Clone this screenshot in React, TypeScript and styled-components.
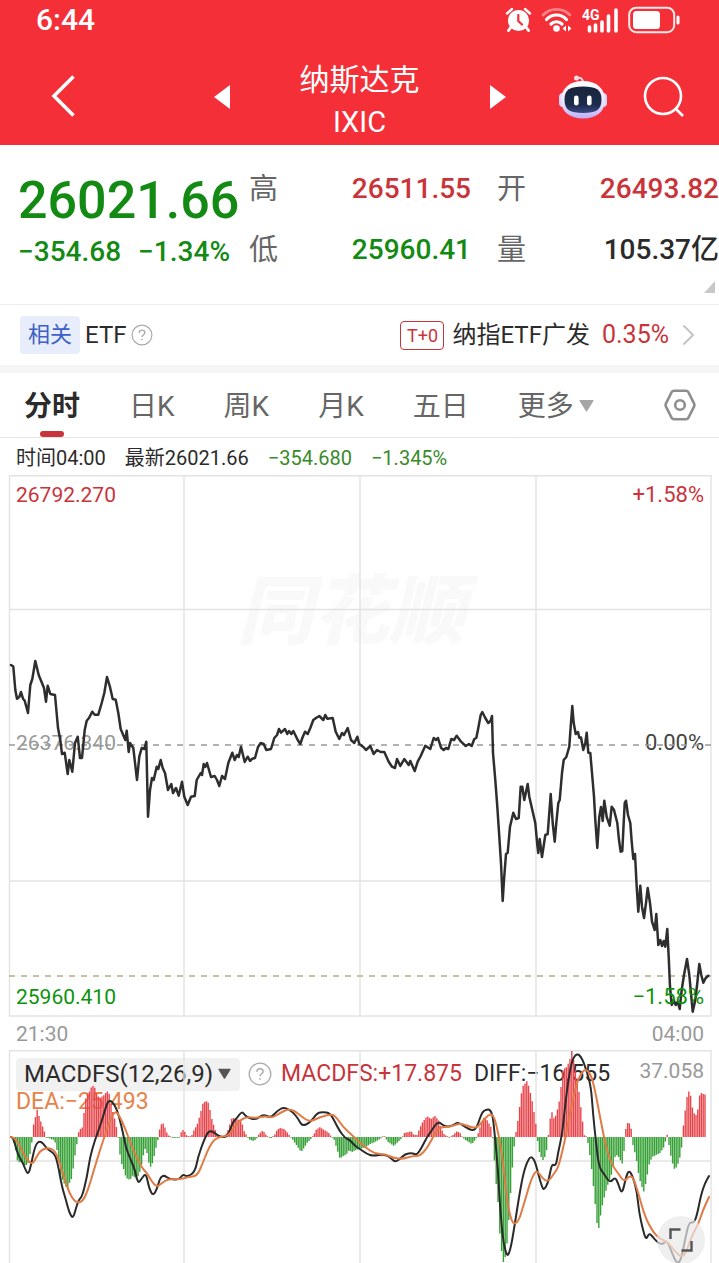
import React from "react";
import styled, { createGlobalStyle } from "styled-components";

const RED = "#c9343b";
const GREEN = "#138a13";
const INK = "#2b2b2b";
const MUTED = "#666";
const ORANGE = "#e8824a";

const GlobalStyle = createGlobalStyle`
  * { box-sizing: border-box; }
  body {
    margin: 0;
    background: #fff;
    color: ${INK};
    font-family: Roboto, "Noto Sans CJK SC", sans-serif;
  }
  button {
    margin: 0;
    padding: 0;
    border: 0;
    background: none;
    color: inherit;
    font: inherit;
    cursor: pointer;
  }
  a { color: inherit; text-decoration: none; }
  svg { display: block; }
`;

const Page = styled.main`
  width: 100%;
  overflow: hidden;
`;

/* ---------- header ---------- */

const Header = styled.header`
  background: #f42f38;
  color: #fff;
`;

const StatusBar = styled.div`
  display: flex;
  align-items: center;
  justify-content: space-between;
  height: 40px;
  padding: 0 38px 0 36px;
  font-size: 30px;
  font-weight: 500;
  line-height: 40px;
`;

const StatusIcons = styled.div`
  display: flex;
  align-items: center;
  gap: 9px;
`;

const NavBar = styled.nav`
  display: grid;
  grid-template-columns: 1fr 292px 1fr;
  align-items: center;
  height: 105px;
  padding-top: 9px;
`;

const NavStart = styled.div`
  display: flex;
  padding: 0 0 3px 51px;
`;

const NavCenter = styled.div`
  display: flex;
  align-items: center;
  justify-content: space-between;
`;

const NavEnd = styled.div`
  display: flex;
  align-items: center;
  justify-content: flex-end;
  gap: 35px;
  padding-right: 34px;
`;

const Title = styled.h1`
  margin: 0;
  padding-top: 8px;
  text-align: center;
  font-size: 30px;
  font-weight: 400;
  line-height: 42px;
`;

const Ticker = styled.span`
  display: block;
  font-size: 29px;
`;

/* ---------- quote ---------- */

const Quote = styled.section`
  position: relative;
  display: flex;
  height: 160px;
  padding: 23px 0 0 18px;
  border-bottom: 1px solid #ededed;
`;

const PriceBlock = styled.div`
  flex: 0 0 231px;
  color: ${GREEN};
`;

const Price = styled.div`
  font-size: 52px;
  font-weight: 500;
  line-height: 66px;
`;

const Changes = styled.div`
  display: flex;
  gap: 17px;
  font-size: 28px;
  font-weight: 500;
  line-height: 36px;
`;

const Stats = styled.dl`
  flex: 1;
  display: grid;
  grid-template-columns: 1fr 1fr;
  grid-auto-rows: 42px;
  gap: 19px 26px;
  margin: 0;
`;

const Stat = styled.div`
  display: flex;
  align-items: center;
  justify-content: space-between;
  line-height: 42px;
`;

const StatLabel = styled.dt`
  color: ${MUTED};
  font-size: 29px;
`;

const StatValue = styled.dd<{ $color: string }>`
  margin: 0;
  color: ${(p) => p.$color};
  font-size: 28px;
  font-weight: 500;
  line-height: 44px;
  white-space: nowrap;
`;

const ExpandCorner = styled.button`
  position: absolute;
  right: 4px;
  bottom: 11px;
`;

/* ---------- related fund ---------- */

const Related = styled.section`
  display: flex;
  align-items: center;
  justify-content: space-between;
  height: 68px;
  padding: 0 24px 0 20px;
  border-bottom: 8px solid #f5f5f5;
  font-size: 24px;
`;

const RelatedGroup = styled.div`
  display: flex;
  align-items: center;
  gap: 5px;
`;

const RelatedTag = styled.span`
  padding: 0 8px;
  border-radius: 4px;
  background: #e8edfb;
  color: #3e5fc8;
  font-size: 22px;
  line-height: 38px;
`;

const Fund = styled.a`
  display: flex;
  align-items: center;
  line-height: 32px;
`;

const FundBadge = styled.span`
  width: 44px;
  border: 1px solid ${RED};
  border-radius: 4px;
  color: ${RED};
  font-size: 18px;
  line-height: 27px;
  text-align: center;
`;

const FundName = styled.span`
  margin: 0 12px 0 8px;
`;

const FundChange = styled.span`
  margin-right: 13px;
  color: ${RED};
  font-size: 25px;
`;

/* ---------- tabs ---------- */

const Tabs = styled.nav`
  display: flex;
  gap: 49px;
  height: 65px;
  padding: 0 23px 0 24px;
  border-bottom: 1px solid #e6e6e6;
  font-size: 28px;
  line-height: 64px;
`;

const Tab = styled.button<{ $active?: boolean }>`
  position: relative;
  display: flex;
  align-items: center;
  gap: 5px;
  padding-top: 3px;
  color: ${(p) => (p.$active ? INK : MUTED)};
  font-weight: ${(p) => (p.$active ? 700 : 400)};
  white-space: nowrap;

  &::after {
    content: "";
    display: ${(p) => (p.$active ? "block" : "none")};
    position: absolute;
    bottom: 0;
    left: 50%;
    width: 24px;
    height: 6px;
    margin-left: -12px;
    border-radius: 3px;
    background: ${RED};
  }
`;

const SettingsButton = styled.button`
  margin-left: auto;
`;

/* ---------- charts ---------- */

const Readout = styled.div`
  display: flex;
  gap: 19px;
  height: 37px;
  padding-left: 16px;
  font-size: 20px;
  line-height: 41px;
`;

const Colored = styled.span<{ $color: string }>`
  color: ${(p) => p.$color};
`;

const ChartPanel = styled.section`
  position: relative;
`;

const ChartSvg = styled.svg`
  position: relative;
  width: 100%;
  height: auto;
  pointer-events: none;
`;

const AxisRow = styled.div<{ $top?: string; $color: string }>`
  position: absolute;
  top: ${(p) => p.$top};
  left: 0;
  right: 0;
  display: flex;
  justify-content: space-between;
  padding: 0 15px 0 16px;
  color: ${(p) => p.$color};
  font-size: 21px;
  line-height: 24px;
`;

const AxisPercent = styled.span<{ $color?: string }>`
  color: ${(p) => p.$color ?? "inherit"};
  font-size: 22px;
`;

const TimeAxis = styled.div`
  display: flex;
  justify-content: space-between;
  height: 33px;
  padding: 0 15px 0 16px;
  color: #999;
  font-size: 21px;
  line-height: 35px;
`;

const Legend = styled.div`
  position: absolute;
  top: 7px;
  left: 16px;
  right: 15px;
  font-size: 23px;
`;

const LegendRow = styled.div`
  display: flex;
  align-items: center;
  line-height: 34px;
  white-space: nowrap;
`;

const IndicatorButton = styled.button`
  display: flex;
  align-items: center;
  justify-content: space-between;
  width: 224px;
  margin-right: 8px;
  padding: 0 9px 0 8px;
  border-radius: 4px;
  background: #f1f1f1;
  font-size: 24px;
  line-height: 33px;
`;

const LegendValue = styled.span<{ $color: string }>`
  margin-left: 9px;
  color: ${(p) => p.$color};

  & + & { margin-left: 12px; }
`;

const ScaleMax = styled.span`
  margin-left: auto;
  color: #999;
  font-size: 21px;
  line-height: 24px;
  padding-bottom: 7px;
`;

const DeaValue = styled.div`
  color: ${ORANGE};
  line-height: 22px;
`;

const FullscreenButton = styled.button`
  position: absolute;
  right: 14px;
  bottom: -1px;
  display: grid;
  place-items: center;
  width: 48px;
  height: 48px;
  border-radius: 50%;
  background: rgba(232, 232, 232, 0.7);
`;

/* ---------- data ---------- */

type Point = [number, number];

const parse = (s: string): Point[] =>
  s.trim().split(/\s+/).map((p) => p.split(",").map(Number) as Point);

const price = `
11,665 13.3,666.5 15.3,690 17,698.7 19.3,697 21,692 23,698.7 24.7,700.7 28,713 30.3,685 32.3,679 35.3,661
38.7,675 44,688 46,701.7 47.7,685.7 50.3,694 55,695 58,728 60.3,740 62,754 64.7,752.7 67.7,774 69.3,760
72.3,771.7 75,743 77.7,736.7 80,758 82,758 84.7,730 86.7,720.7 89,718 92.3,711.7 94.7,714.7 98.3,714.7
101.7,703 104.3,693 107,677 110,687 112.7,699 115.7,699.7 118.3,713 120.7,729 125.3,740 126.7,730.7
128.7,752 130,743 133.3,748 137,780 139.3,756.7 141.7,748 144.3,749 146.3,741.7 148,816.7 150,790 152,778
153.7,780 156.7,766.7 158.3,769 160.7,760 162.7,768 165,773 168,790 171.3,784 173,793 176,788 178.7,795.7
182,781.7 184.3,796.7 187.7,805 191,796.7 194.7,796 196.7,780 200.7,773 202,775 203.7,764 205.3,767 207,763
211,777 214.7,776 217,780 219.3,786 222,776 225,779 228.3,763 232.3,752.7 234.7,760 237,755 238.7,757
241,746.7 244.7,762 247.7,756.7 250,761 252.3,758.7 255,758 258,747 260.7,743 263.7,744 266.3,750 271,749
274.3,738 277,735 279,729 281,732.7 285,729 287.3,734 289,731 291.3,734 293.3,731 295.3,735 297.7,740
300.3,744 302.3,738 305,731.7 307.7,734 310.3,728 313.3,720 316,718 319.3,716 323.3,720 325.3,715
327.3,718.7 332.7,718 335.7,731.7 339.3,739 342,733 344,735 347.7,728 351,740 354.3,743 357.3,736.7
359.3,744 363,746.7 366,750 370.3,746 373.7,754 377,750 380.7,752 384.3,752 388.7,761.7 392,766.7 395,768
397,759 400.3,766 404.3,759 408.7,765 410.3,761 414.7,771 417.7,761.7 420.7,756 425.3,745.7 430.3,749
433.7,738 436,740 438,738 441,747.7 443.7,750 446,748 448.3,749 451.3,739 454,740 456.7,735.7 461,741.7
465.7,746 469,744 471.7,746 474.3,739 476.3,738 478.3,728 480.7,715 482.3,712 485.3,718 488.3,723
490.5,721 492,716 493,753 495.3,780 497.3,806.7 499.3,836.7 501,863 502.7,901 504,880 506,854 507.7,852.7
510,826.7 513.3,812.7 516,819 518.7,818 520.7,786.7 522.3,786.7 524.3,800 527.7,784 529.3,796.7 533,813
535.3,823 537.3,845 538.3,853 539.7,839 542,857 545.3,835 547.7,834 550.7,794 552.7,823 554.7,841.7
556.3,823 558.3,803 559.7,800 562,773 563.7,760 566.3,757 569.3,746.7 570.7,726.7 572.3,706 573.7,723
575.7,734 578,732 579.3,737.7 581,737.5 583.3,750 585.3,743 586.7,732.7 588.3,752.7 590.3,753 592,773
594,796.7 595.3,820 597.3,848 599.3,816.7 601,807 602.7,821 604.3,800.7 606.7,817 609.7,825.7 611.7,806.7
614,810 617.3,823 619,840 620.7,851.7 622.3,851 624.7,803 626,800.7 628,815 630.3,823 631.7,841.7
633.3,859 635,854 636.7,886.7 638.3,911.7 640.3,885.7 642,906.7 644,918 646,903 647.7,888 650,903
652,921.7 654.7,930 656.3,914 658.3,945 660.3,940 662,946 663.7,941 665.3,946.7 667.3,929 668.7,956.7
670,986.7 671.7,1005 673.7,1000 675.7,1005 677.7,1001.7 679.7,1009 681.7,990 684,975 687,959 689.3,975
692.7,1011.7 695.3,1000 697.3,983 699.3,964 701.3,975 703.3,982.7 705.7,978 708.3,975.7`;

const diff = `
11,1137 13,1137 18,1155 23,1163 28,1176 31,1165 35,1146 39,1141 43,1143 47,1149 55,1154 58,1165 62,1187
66,1200 69,1212 73,1219 76,1208 79,1199 82,1197 87,1177 90,1157 95,1140 99,1129 103,1117 107,1103 110,1100
115,1105 119,1116 123,1133 126,1148 130,1158 135,1170 138,1184 142,1178 146,1173 149,1188 153,1196 157,1189
160,1178 164,1175 169,1179 179,1180 183,1174 187,1177 195,1172 198,1157 204,1140 209,1130 215,1133 220,1137
227,1137 230,1130 233,1122 237,1118 242,1111 246,1117 256,1120 263,1114 271,1118 277,1111 284,1107 293,1112
299,1120 302,1126 310,1123 317,1113 323,1112 330,1113 335,1122 339,1130 345,1138 350,1140 355,1146 360,1149
367,1154 373,1156 385,1154 392,1159 395,1162 400,1159 405,1154 412,1153 417,1155 422,1147 427,1137 432,1130
438,1121 445,1127 452,1126 458,1122 465,1127 473,1131 477,1127 481,1115 484,1110 492,1109 495,1137 498,1170
500,1207 503,1240 506,1253 508,1256 511,1247 515,1223 519,1197 523,1175 527,1162 531,1156 535,1161 538,1173
542,1187 544,1190 548,1183 550,1173 552,1164 556,1166 558,1153 562,1135 565,1107 568,1082 572,1060 577,1053
582,1058 587,1072 591,1087 593,1113 596,1143 599,1167 604,1174 610,1183 615,1177 618,1183 622,1195 626,1177
629,1170 633,1177 637,1192 639,1212 643,1230 646,1240 649,1233 653,1237 656,1241 662,1245 667,1240 672,1253
677,1264 681,1260 685,1240 689,1222 694,1223 697,1215 701,1195 705,1183 709,1176`;

const dea = `
11,1137 15,1138 20,1146 25,1157 32,1165 36,1158 40,1151 46,1148 53,1149 57,1155 62,1170 67,1187 72,1198
77,1203 83,1201 88,1190 93,1173 100,1150 106,1132 110,1120 115,1111 119,1115 125,1128 132,1147 137,1158
142,1168 147,1173 152,1182 157,1187 162,1183 168,1179 182,1179 188,1177 197,1176 202,1165 207,1152 212,1142
218,1137 228,1136 233,1129 240,1120 247,1117 257,1118 265,1116 272,1118 280,1113 288,1109 295,1111 302,1117
310,1122 320,1117 332,1114 337,1118 343,1127 352,1135 360,1143 365,1147 375,1154 385,1154 393,1158 403,1159
412,1156 420,1156 428,1147 435,1133 440,1127 450,1127 460,1123 470,1127 477,1128 483,1121 488,1115 493,1114
497,1127 502,1153 505,1183 508,1207 512,1222 515,1224 519,1220 523,1207 528,1190 532,1177 537,1170 542,1178
548,1182 553,1175 558,1168 562,1153 567,1130 572,1103 577,1082 582,1072 586,1069 591,1075 595,1090 600,1117
606,1147 612,1165 618,1173 624,1182 629,1176 633,1177 638,1192 645,1217 653,1232 660,1239 668,1242 675,1252
683,1258 688,1247 693,1233 698,1225 703,1210 709,1197`;

/* Histogram outline: x position, signed height above the zero line. */
const histogram = parse(`
12,-1 14,-6 16,-15 18,-27 20,-24 25,-29 28,-27 31,-12 32.5,0 33,10 35,18 37,28 39,21 42,12 44,7 46,0 48,-1
51,-2 54,-3 56,-7 59,-25 60,-36 62,-42 65,-48 68,-53 70,-44 72,-41 74,-25 76,-12 78,0 79,8 82,8 84,24 86,40
88,44 90,46 92,52 95,49 97,42 100,39 104,42 107,46 109,44 112,28 115,17 118,2 119,-10 121,-25 124,-33 126,-41
130,-43 133,-38 136,-42 139,-38 142,-26 144,-15 146,-10 148,-22 150,-31 153,-25 155,-15 158,-2 160,10 162,14
164,13 166,6 168,2 173,-1 180,0 182,8 185,5 187,1 189,0 192,2 194,7 197,12 200,22 203,34 206,36 208,35
210,27 212,17 215,8 217,3 219,0 224,1 226,3 229,9 231,18 233,19 236,18 240,17 242,14 244,6 247,1 250,-3
254,-4 257,-1 259,3 262,6 264,5 267,1 271,-1 274,1 277,7 280,9 284,8 287,5 290,1 293,-3 297,-9 301,-15
304,-11 307,-6 310,-3 313,1 316,7 320,10 324,7 328,5 331,1 334,-2 337,-12 340,-22 343,-19 346,-18 349,-13
352,-15 356,-13 360,-12 366,-10 370,-7 375,-5 380,-2 384,1 388,-5 394,-9 398,-5 402,-1 404,4 409,5 411,6
414,2 417,2 419,7 422,14 427,21 431,18 435,21 439,16 441,9 444,3 449,-1 452,1 457,6 460,4 463,-1 467,-4
472,-7 476,-2 478,3 481,13 484,20 487,17 491,10 492.5,0 494,-18 496,-45 498,-65 500,-100 503,-126 506,-118
508,-95 510,-65 512,-35 514,-12 515,0 517,10 519,25 521,42 523,51 527,56 529,50 532,37 534,25 536,12 538,-8
540,-18 543,-23 546,-18 548,-1 549.5,10 551,28 554,18 556,22 559,34 561,50 563,68 567,70 570,78 572,87
575,68 577,60 579,45 581,28 583,12 584,2 587,0 589,-12 592,-35 594,-55 596,-75 598,-97 600,-82 602,-70
605,-57 608,-47 612,-36 615,-20 617,-18 620,-22 622,-28 624,-14 625,0 626,10 628,15 630,13 632,5 633,-8
636,-20 639,-40 642,-50 644,-55 647,-40 649,-28 652,-20 656,-18 660,-16 664,-10 667,2 668,3 669,-8 671,-20
674,-32 677,-30 680,-20 682,-8 683,8 685,25 687,40 689,46 691,40 693,25 696,22 698,28 700,45 703,43 708,42`);

const ZERO = 1137;

const heightAt = (x: number) => {
  const i = Math.max(1, histogram.findIndex(([px]) => px >= x));
  const [x0, y0] = histogram[i - 1];
  const [x1, y1] = histogram[i];
  return y0 + ((y1 - y0) * (x - x0)) / (x1 - x0);
};

const bars = Array.from({ length: 386 }, (_, i) => {
  const x = 12 + i * 1.8;
  return { x, h: heightAt(x) };
}).filter((b) => b.x <= 708);

const barPath = (positive: boolean) =>
  bars
    .filter((b) => b.h >= 0 === positive)
    .map((b) => `M${b.x.toFixed(1)} ${ZERO}V${(ZERO - (Math.abs(b.h) < 0.8 ? 0.8 * Math.sign(b.h || 1) : b.h)).toFixed(1)}`)
    .join("");

/* Rounds the corners of a polyline by curving through segment midpoints. */
const smooth = (s: string) => {
  const p = parse(s);
  let d = `M${p[0]}`;
  for (let i = 1; i < p.length - 1; i++) {
    d += `Q${p[i]} ${(p[i][0] + p[i + 1][0]) / 2},${(p[i][1] + p[i + 1][1]) / 2}`;
  }
  return `${d}L${p[p.length - 1]}`;
};

/* ---------- icons ---------- */

const AlarmIcon = () => (
  <svg width="27" height="26" viewBox="0 0 27 26" fill="none" aria-hidden="true">
    <circle cx="13.500" cy="13.500" r="10.600" fill="#fff" />
    <path d="M2 6.500L7 2M25 6.500L20 2" stroke="#fff" strokeWidth="2.400" strokeLinecap="round" />
    <path d="M6 20L3.500 23.500M21 20L23.500 23.500" stroke="#fff" strokeWidth="3" strokeLinecap="round" />
    <path d="M13.300 8V14L17 17.500" stroke="#f42f38" strokeWidth="2.200" strokeLinecap="round" />
  </svg>
);

const WifiIcon = () => (
  <svg width="32" height="26" viewBox="0 0 32 26" fill="none" stroke="#fff" strokeWidth="2.800" strokeLinecap="round" aria-hidden="true">
    <path d="M2 8C9 .5 22 .5 29 8" opacity=".4" />
    <path d="M5.500 12.500C11 6.500 20 6.500 25.500 12.500" strokeWidth="3.200" />
    <path d="M10 17C13 14 18 14 21 17" strokeWidth="3.200" />
    <circle cx="15.500" cy="21.500" r="3.300" fill="#fff" stroke="none" />
    <path d="M25 18.500V24.500L21.500 21.500ZM27 18.500V24.500L30.500 21.500Z" fill="#fff" stroke="none" />
  </svg>
);

const SignalIcon = () => (
  <svg width="37" height="28" viewBox="0 0 37 28" aria-hidden="true">
    <text x="0" y="14" fill="#fff" fontSize="14" fontWeight="700">4G</text>
    <path d="M7.500 21V25M13.500 19V25M20 16V25M26.500 10V25M34 4V25" stroke="#fff" strokeWidth="3.600" strokeLinecap="round" />
  </svg>
);

const BatteryIcon = () => (
  <svg width="53" height="28" viewBox="0 0 53 28" fill="none" aria-hidden="true">
    <rect x="1.200" y="1.700" width="45" height="24.500" rx="7" stroke="#fff" strokeWidth="2" opacity=".9" />
    <rect x="5" y="5" width="27" height="18" rx="3.500" fill="#fff" />
    <path d="M50 11V17" stroke="#fff" strokeWidth="3" strokeLinecap="round" />
  </svg>
);

const BackIcon = () => (
  <svg width="24" height="42" viewBox="0 0 24 42" fill="none" aria-hidden="true">
    <path d="M22.500 1.500L3 21L22.500 40.500" stroke="#fff" strokeWidth="3.600" />
  </svg>
);

const Triangle = ({ flip = false }: { flip?: boolean }) => (
  <svg width="16" height="24" viewBox="0 0 16 24" aria-hidden="true">
    <path d={flip ? "M0 0L16 12L0 24Z" : "M16 0L0 12L16 24Z"} fill="#fff" />
  </svg>
);

const RobotIcon = () => (
  <svg width="50" height="46" viewBox="0 0 50 46" aria-hidden="true">
    <defs>
      <linearGradient id="shell" x1="0" y1="0" x2="0" y2="1">
        <stop offset="0" stopColor="#fff" />
        <stop offset=".6" stopColor="#e9e2ff" />
        <stop offset="1" stopColor="#bdb0f4" />
      </linearGradient>
      <linearGradient id="visor" x1="0" y1="0" x2="0" y2="1">
        <stop offset="0" stopColor="#19243c" />
        <stop offset=".7" stopColor="#1c2c4c" />
        <stop offset="1" stopColor="#3b4a86" />
      </linearGradient>
    </defs>
    <path d="M18.500 4Q25 2.500 25 9" fill="none" stroke="#fbdde8" strokeWidth="1.800" />
    <circle cx="18.500" cy="4" r="2.500" fill="#fbdde8" />
    <rect x="1" y="19" width="8" height="14" rx="4" fill="#dcd5fd" />
    <rect x="41" y="19" width="8" height="14" rx="4" fill="#dcd5fd" />
    <path d="M25 7C39 7 47 15 47 26C47 38 38 44.500 25 44.500C12 44.500 3 38 3 26C3 15 11 7 25 7Z" fill="url(#shell)" />
    <path d="M25 12.500C38 12.500 43.500 15.500 43.500 25.500C43.500 36 38 39 25 39C12 39 6.500 36 6.500 25.500C6.500 15.500 12 12.500 25 12.500Z" fill="url(#visor)" />
    <rect x="16" y="21.500" width="4.600" height="10" rx="2.300" fill="#fff" />
    <rect x="29" y="21.500" width="4.600" height="10" rx="2.300" fill="#fff" />
  </svg>
);

const SearchIcon = () => (
  <svg width="42" height="42" viewBox="0 0 42 42" fill="none" stroke="#fff" strokeWidth="2.600" aria-hidden="true">
    <circle cx="20" cy="20" r="18" />
    <path d="M33 33L40 40" />
  </svg>
);

const HelpIcon = ({ size }: { size: number }) => (
  <svg width={size} height={size} viewBox="0 0 24 24" fill="none" stroke="#aaa" strokeWidth="1.300" aria-hidden="true">
    <circle cx="12" cy="12" r="10.800" />
    <path d="M8.900 9.700C8.900 7.800 10.200 6.700 12 6.700C13.800 6.700 15.100 7.800 15.100 9.500C15.100 11.600 12 11.900 12 14.300" strokeWidth="1.500" />
    <circle cx="12" cy="17" r=".6" fill="#aaa" strokeWidth=".6" />
  </svg>
);

const ChevronIcon = () => (
  <svg width="13" height="22" viewBox="0 0 13 22" fill="none" aria-hidden="true">
    <path d="M1.500 1.500L11 11L1.500 20.500" stroke="#c4c4c4" strokeWidth="2" />
  </svg>
);

const CaretIcon = ({ color, size }: { color: string; size: number }) => (
  <svg width={size} height={size} viewBox="0 0 15 15" aria-hidden="true">
    <path d="M1 1H14Q15 1 14.400 2L8.200 12Q7.500 13 6.800 12L.6 2Q0 1 1 1Z" fill={color} />
  </svg>
);

const SettingsIcon = () => (
  <svg width="32" height="32" viewBox="0 0 32 32" fill="none" stroke="#8e8e8e" strokeWidth="2.600" strokeLinejoin="round" aria-hidden="true">
    <path d="M10 1.800H22Q23.500 1.800 24.300 3L30 14.300Q30.800 16 30 17.700L24.300 29Q23.500 30.200 22 30.200H10Q8.500 30.200 7.700 29L2 17.700Q1.200 16 2 14.300L7.700 3Q8.500 1.800 10 1.800Z" />
    <circle cx="16" cy="16" r="4.800" />
  </svg>
);

const verticals = [9.5, 184, 360, 536, 711];

export default function App() {
  return (
    <Page>
      <GlobalStyle />
      <Header>
        <StatusBar>
          <span>6:44</span>
          <StatusIcons>
            <AlarmIcon />
            <WifiIcon />
            <SignalIcon />
            <BatteryIcon />
          </StatusIcons>
        </StatusBar>
        <NavBar>
          <NavStart>
            <button aria-label="返回"><BackIcon /></button>
          </NavStart>
          <NavCenter>
            <button aria-label="上一个"><Triangle /></button>
            <Title>
              纳斯达克
              <Ticker>IXIC</Ticker>
            </Title>
            <button aria-label="下一个"><Triangle flip /></button>
          </NavCenter>
          <NavEnd>
            <button aria-label="智能助手"><RobotIcon /></button>
            <button aria-label="搜索"><SearchIcon /></button>
          </NavEnd>
        </NavBar>
      </Header>

      <Quote>
        <PriceBlock>
          <Price>26021.66</Price>
          <Changes>
            <span>−354.68</span>
            <span>−1.34%</span>
          </Changes>
        </PriceBlock>
        <Stats>
          <Stat>
            <StatLabel>高</StatLabel>
            <StatValue $color={RED}>26511.55</StatValue>
          </Stat>
          <Stat>
            <StatLabel>开</StatLabel>
            <StatValue $color={RED}>26493.82</StatValue>
          </Stat>
          <Stat>
            <StatLabel>低</StatLabel>
            <StatValue $color={GREEN}>25960.41</StatValue>
          </Stat>
          <Stat>
            <StatLabel>量</StatLabel>
            <StatValue $color={INK}>105.37亿</StatValue>
          </Stat>
        </Stats>
        <ExpandCorner aria-label="展开">
          <svg width="11" height="12" viewBox="0 0 11 12"><path d="M11 0V12H0Z" fill="#c8c8c8" /></svg>
        </ExpandCorner>
      </Quote>

      <Related>
        <RelatedGroup>
          <RelatedTag>相关</RelatedTag>
          <span>ETF</span>
          <button aria-label="说明"><HelpIcon size={22} /></button>
        </RelatedGroup>
        <Fund href="#fund">
          <FundBadge>T+0</FundBadge>
          <FundName>纳指ETF广发</FundName>
          <FundChange>0.35%</FundChange>
          <ChevronIcon />
        </Fund>
      </Related>

      <Tabs>
        <Tab $active>分时</Tab>
        <Tab>日K</Tab>
        <Tab>周K</Tab>
        <Tab>月K</Tab>
        <Tab>五日</Tab>
        <Tab>更多<CaretIcon color="#a6a6a6" size={15} /></Tab>
        <SettingsButton aria-label="设置"><SettingsIcon /></SettingsButton>
      </Tabs>

      <Readout>
        <span>时间04:00</span>
        <span>最新26021.66</span>
        <Colored $color="#3a8a2c">−354.680</Colored>
        <Colored $color="#3a8a2c">−1.345%</Colored>
      </Readout>

      <ChartPanel>
        <AxisRow $top="8px" $color={RED}>
          <span>26792.270</span>
          <AxisPercent>+1.58%</AxisPercent>
        </AxisRow>
        <AxisRow $top="calc(50% - 15px)" $color="#999">
          <span>26376.340</span>
          <AxisPercent $color="#444">0.00%</AxisPercent>
        </AxisRow>
        <ChartSvg viewBox="0 475 719 542" role="img" aria-label="分时走势">
          <text x="351" y="638" textAnchor="middle" fontSize="76" fontWeight="900" fontStyle="italic" fill="#000" fillOpacity=".025">同花顺</text>
          <g stroke="#e3e3e3" strokeWidth="1.400">
            {verticals.map((x) => <path key={x} d={`M${x} 475V1016`} />)}
            <path d="M9 475.700H711M9 609.500H711M9 881H711M9 1016H711" />
          </g>
          <path d="M9 745H711" stroke="#999" strokeWidth="1.500" strokeDasharray="6 6" />
          <path d="M9 976H711" stroke="#b3ac86" strokeWidth="1.400" strokeDasharray="6 6" />
          <path d={`M${price.trim().replace(/\s+/g, "L")}`} fill="none" stroke="#2e2e2e" strokeWidth="2.500" strokeLinejoin="round" strokeLinecap="round" />
        </ChartSvg>
        <AxisRow $top="calc(100% - 32px)" $color="#0c930c">
          <span>25960.410</span>
          <AxisPercent>−1.58%</AxisPercent>
        </AxisRow>
      </ChartPanel>
      <TimeAxis>
        <span>21:30</span>
        <span>04:00</span>
      </TimeAxis>

      <ChartPanel>
        <Legend>
          <LegendRow>
            <IndicatorButton>
              MACDFS(12,26,9)
              <CaretIcon color="#555" size={13} />
            </IndicatorButton>
            <button aria-label="指标说明"><HelpIcon size={24} /></button>
            <LegendValue $color={RED}>MACDFS:+17.875</LegendValue>
            <LegendValue $color={INK}>DIFF:−16.555</LegendValue>
            <ScaleMax>37.058</ScaleMax>
          </LegendRow>
          <DeaValue>DEA:−25.493</DeaValue>
        </Legend>
        <ChartSvg viewBox="0 1050 719 213" role="img" aria-label="MACDFS">
          <g stroke="#e3e3e3" strokeWidth="1.400">
            {verticals.map((x) => <path key={x} d={`M${x} 1050V1263`} />)}
            <path d="M9 1050.700H711M9 1161H711" />
          </g>
          <path d={barPath(true)} stroke="#e8454b" strokeWidth="1.400" />
          <path d={barPath(false)} stroke="#35a035" strokeWidth="1.400" />
          <g fill="none" strokeWidth="2" strokeLinejoin="round" strokeLinecap="round">
            <path d={smooth(diff)} stroke="#2a2a2a" />
            <path d={smooth(dea)} stroke="#e07b45" />
          </g>
        </ChartSvg>
        <FullscreenButton aria-label="全屏">
          <svg width="24" height="24" viewBox="0 0 24 24" fill="none" stroke="#555" strokeWidth="2.400" aria-hidden="true">
            <path d="M1.500 11V1.500H11.500M22.500 13V22.500H12.500" />
          </svg>
        </FullscreenButton>
      </ChartPanel>
    </Page>
  );
}
